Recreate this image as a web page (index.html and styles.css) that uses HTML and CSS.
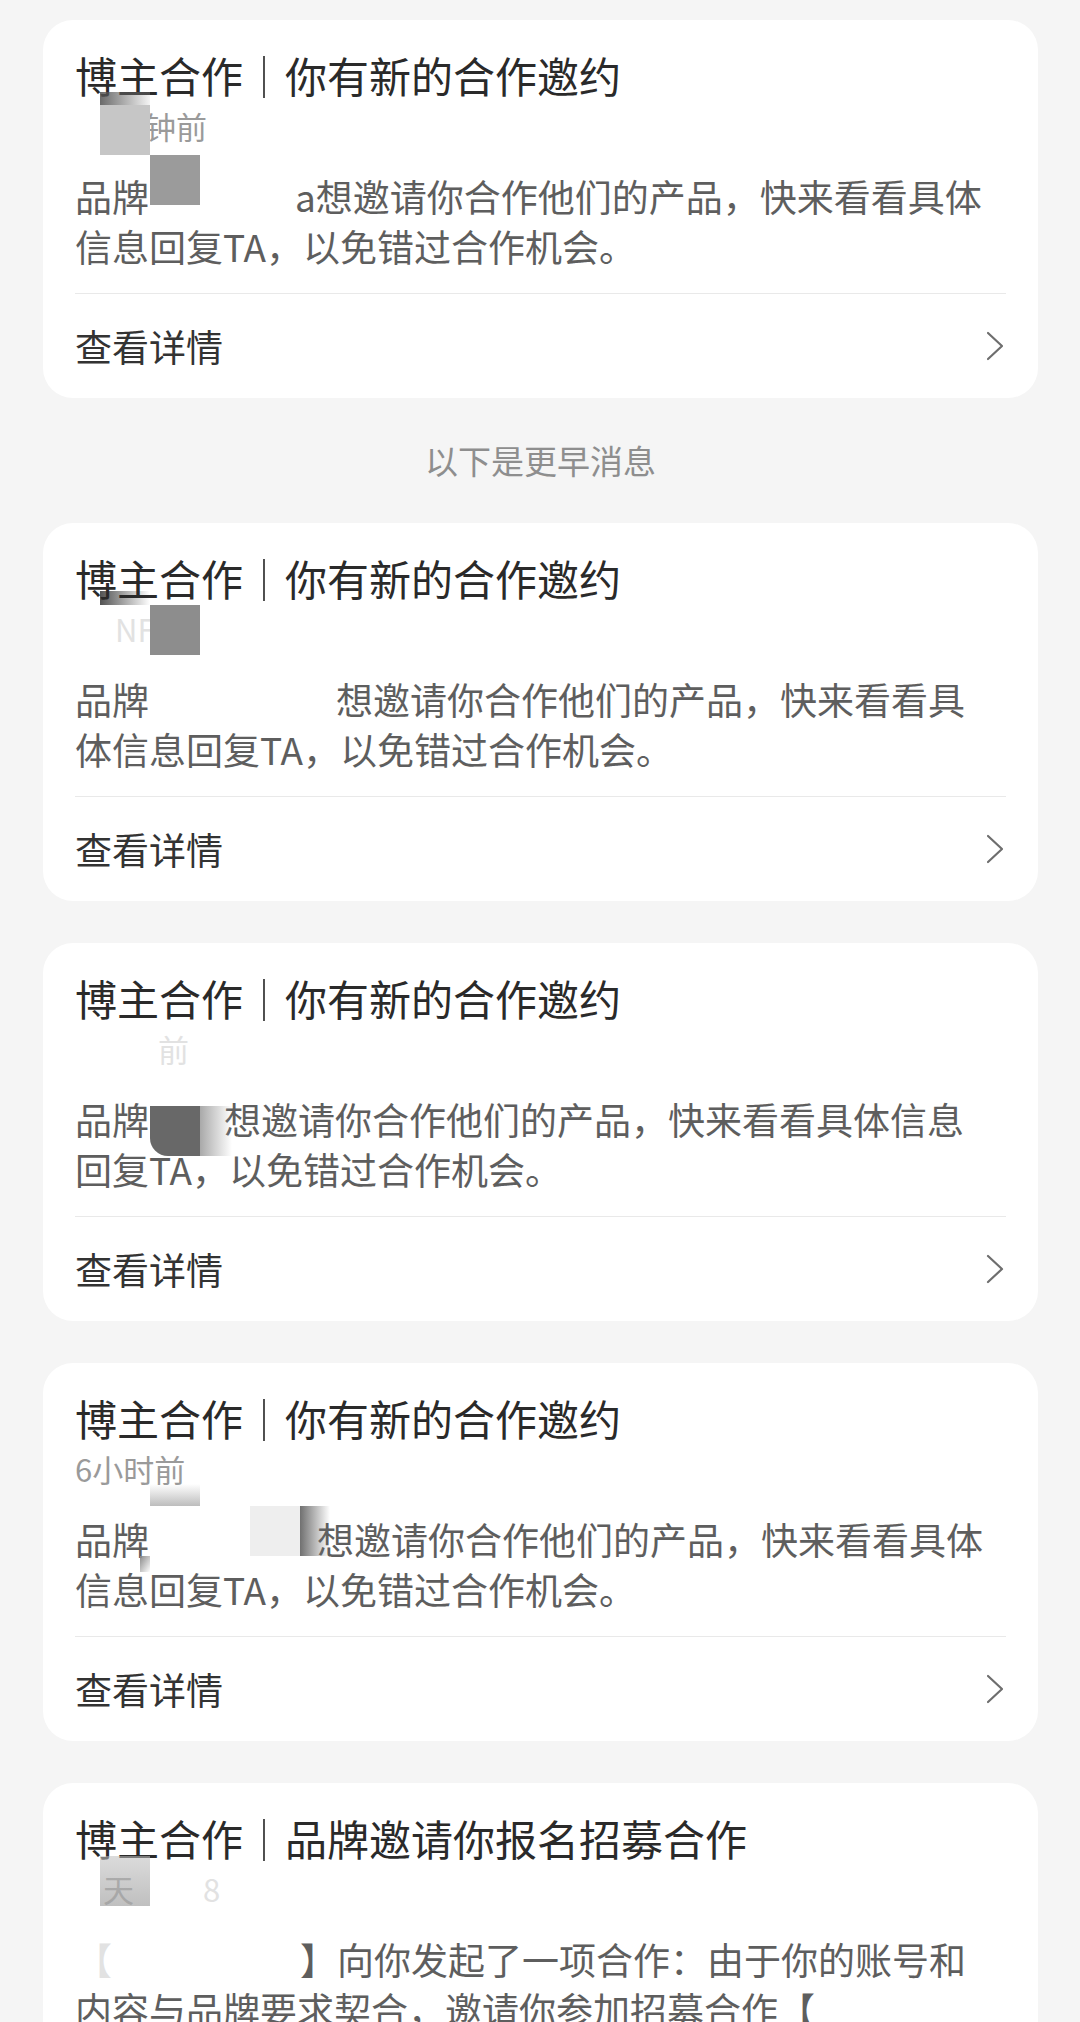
FILE: index.html
```html
<!DOCTYPE html>
<html lang="zh-CN">
<head>
<meta charset="utf-8">
<title>消息</title>
<link rel="stylesheet" href="styles.css">
</head>
<body>
<main class="list">

  <section class="card">
    <h2 class="title">博主合作<span class="bar">｜</span>你有新的合作邀约</h2>
    <div class="time"><span class="sp sp-70"></span>钟前</div>
    <p class="body">品牌<span class="sp sp-146"></span>a想邀请你合作他们的产品，快来看看具体信息回复TA，以免错过合作机会。</p>
    <div class="rule"></div>
    <a class="more" href="#"><span>查看详情</span><svg class="chev" viewBox="0 0 18 30" width="18" height="30"><path d="M2 2 L16 15 L2 28" fill="none" stroke="#6e6e6e" stroke-width="2.2" stroke-linecap="round" stroke-linejoin="round"/></svg></a>
    <i class="mz c1-f"></i>
    <i class="mz c1-a"></i>
    <i class="mz c1-b"></i>
  </section>

  <div class="label">以下是更早消息</div>

  <section class="card">
    <h2 class="title">博主合作<span class="bar">｜</span>你有新的合作邀约</h2>
    <div class="time"><span class="sp sp-40"></span><span class="faint">NF</span></div>
    <p class="body">品牌<span class="sp sp-187"></span>想邀请你合作他们的产品，快来看看具体信息回复TA，以免错过合作机会。</p>
    <div class="rule"></div>
    <a class="more" href="#"><span>查看详情</span><svg class="chev" viewBox="0 0 18 30" width="18" height="30"><path d="M2 2 L16 15 L2 28" fill="none" stroke="#6e6e6e" stroke-width="2.2" stroke-linecap="round" stroke-linejoin="round"/></svg></a>
    <i class="mz c2-f"></i>
    <i class="mz c2-a"></i>
  </section>

  <section class="card">
    <h2 class="title">博主合作<span class="bar">｜</span>你有新的合作邀约</h2>
    <div class="time"><span class="sp sp-83"></span><span class="faint">前</span></div>
    <p class="body">品牌<span class="sp sp-75"></span>想邀请你合作他们的产品，快来看看具体信息回复TA，以免错过合作机会。</p>
    <div class="rule"></div>
    <a class="more" href="#"><span>查看详情</span><svg class="chev" viewBox="0 0 18 30" width="18" height="30"><path d="M2 2 L16 15 L2 28" fill="none" stroke="#6e6e6e" stroke-width="2.2" stroke-linecap="round" stroke-linejoin="round"/></svg></a>
    <i class="mz c3-a"></i>
    <i class="mz c3-b"></i>
  </section>

  <section class="card">
    <h2 class="title">博主合作<span class="bar">｜</span>你有新的合作邀约</h2>
    <div class="time">6小时前</div>
    <p class="body">品牌<span class="sp sp-168"></span>想邀请你合作他们的产品，快来看看具体信息回复TA，以免错过合作机会。</p>
    <div class="rule"></div>
    <a class="more" href="#"><span>查看详情</span><svg class="chev" viewBox="0 0 18 30" width="18" height="30"><path d="M2 2 L16 15 L2 28" fill="none" stroke="#6e6e6e" stroke-width="2.2" stroke-linecap="round" stroke-linejoin="round"/></svg></a>
    <i class="mz c4-f"></i>
    <i class="mz c4-a"></i>
    <i class="mz c4-b"></i>
    <i class="mz c4-c"></i>
  </section>

  <section class="card">
    <h2 class="title">博主合作<span class="bar">｜</span>品牌邀请你报名招募合作</h2>
    <div class="time"><span class="sp sp-28"></span><span class="mid">天</span><span class="sp sp-69"></span><span class="faint">8</span></div>
    <p class="body"><span class="faint">【</span><span class="sp sp-188"></span>】向你发起了一项合作：由于你的账号和内容与品牌要求契合，邀请你参加招募合作【<span class="sp sp-120"></span>】，快来看看具体信息吧。</p>
    <div class="rule"></div>
    <a class="more" href="#"><span>查看详情</span><svg class="chev" viewBox="0 0 18 30" width="18" height="30"><path d="M2 2 L16 15 L2 28" fill="none" stroke="#6e6e6e" stroke-width="2.2" stroke-linecap="round" stroke-linejoin="round"/></svg></a>
    <i class="mz c5-a"></i>
  </section>

</main>
</body>
</html>
```

FILE: styles.css
```css
* { box-sizing: border-box; }

html, body {
  margin: 0;
  padding: 0;
  background: #f5f5f5;
}

body {
  font-family: "Noto Sans CJK SC", "Noto Sans", sans-serif;
  color: #333;
  -webkit-font-smoothing: antialiased;
}

.list {
  display: flex;
  flex-direction: column;
  gap: 42px;
  padding: 20px 42px 60px 43px;
}

.card {
  position: relative;
  background: #ffffff;
  border-radius: 30px;
  padding: 27px 32px 0 32px;
  overflow: hidden;
}

.title {
  margin: 0;
  font-size: 42px;
  line-height: 56px;
  font-weight: 400;
  color: #2a2a2a;
  white-space: nowrap;
}

.bar {
  display: inline-block;
  color: #3a3a3a;
  will-change: transform;
}

.time {
  margin-top: 3px;
  font-size: 31px;
  line-height: 40px;
  height: 40px;
  color: #9a9a9a;
  white-space: nowrap;
}

.body {
  margin: 25px 0 0 0;
  padding-right: 20px;
  font-size: 37px;
  line-height: 50px;
  color: #5e5e5e;
}

.rule {
  margin-top: 22px;
  height: 1px;
  background: #e9e9e9;
}

.more {
  display: flex;
  align-items: center;
  justify-content: space-between;
  height: 104px;
  font-size: 37px;
  color: #333;
  text-decoration: none;
}

.chev {
  display: block;
  margin-right: 2px;
}

.label {
  text-align: center;
  font-size: 33px;
  line-height: 41px;
  color: #8e8e8e;
}

.sp { display: inline-block; height: 1px; }
.sp-28 { width: 28px; }
.sp-40 { width: 40px; }
.sp-69 { width: 69px; }
.sp-70 { width: 70px; }
.sp-75 { width: 75px; }
.sp-83 { width: 83px; }
.sp-120 { width: 120px; }
.sp-146 { width: 146px; }
.sp-168 { width: 168px; }
.sp-187 { width: 187px; }
.sp-188 { width: 188px; }

.faint { color: #e2e2e2; }
.mid { color: #9a9a9a; }

/* mosaic (censor) tiles lying over the text */
.mz {
  position: absolute;
  display: block;
  width: 50px;
  height: 50px;
}

.c1-f { left: 57px; top: 72px; height: 13px; background: linear-gradient(to right, rgba(80,80,80,0.85), rgba(200,200,200,0.2)); }
.c1-a { left: 57px; top: 85px; background: #c6c6c6; }
.c1-b { left: 107px; top: 135px; background: #9b9b9b; }

.c2-f { left: 57px; top: 68px; height: 14px; background: linear-gradient(to right, rgba(40,40,40,0.8), rgba(255,255,255,0)); }
.c2-a { left: 107px; top: 82px; background: #8d8d8d; }

.c3-a { left: 107px; top: 163px; background: #686868; border-bottom-left-radius: 18px; }
.c3-b { left: 157px; top: 163px; width: 32px; background: linear-gradient(to right, #a9a9a9, rgba(255,255,255,0)); }

.c4-f { left: 107px; top: 121px; height: 22px; background: linear-gradient(to bottom, rgba(255,255,255,0), #bdbdbd); }
.c4-a { left: 207px; top: 143px; background: #eeeeee; }
.c4-b { left: 257px; top: 143px; width: 30px; background: linear-gradient(to right, #707070, rgba(255,255,255,0)); }
.c4-c { left: 97px; top: 193px; width: 10px; height: 16px; background: linear-gradient(to bottom right, #8a8a8a, rgba(255,255,255,0)); }

.c5-a { left: 57px; top: 73px; background: linear-gradient(to bottom, rgba(190,190,190,0.55), rgba(170,170,170,0.75)); }
```
